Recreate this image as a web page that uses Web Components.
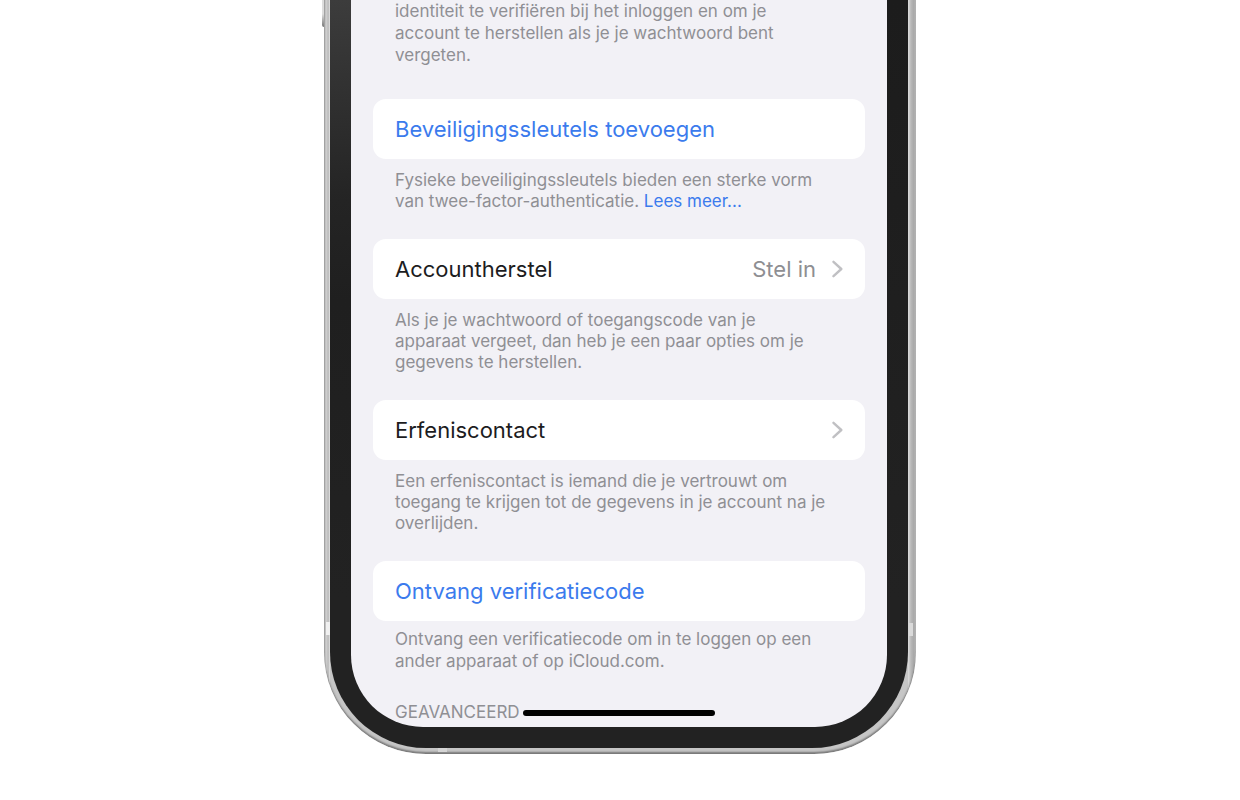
<!DOCTYPE html>
<html lang="nl">
<head>
<meta charset="utf-8">
<meta name="viewport" content="width=device-width, initial-scale=1">
<title>Instellingen – Wachtwoord en beveiliging</title>
<style>
  body { margin: 0; background: #fff; font-family: Inter, "Liberation Sans", sans-serif; }
</style>
</head>
<body>
<phone-frame>
  <settings-note roomy>identiteit te verifiëren bij het inloggen en om je<br>account te herstellen als je je wachtwoord bent<br>vergeten.</settings-note>
  <settings-section>
    <settings-row action label="Beveiligingssleutels toevoegen"></settings-row>
    <settings-note>Fysieke beveiligingssleutels bieden een sterke vorm<br>van twee-factor-authenticatie. <a href="#lees-meer">Lees meer...</a></settings-note>
  </settings-section>
  <settings-section>
    <settings-row chevron label="Accountherstel" value="Stel in"></settings-row>
    <settings-note>Als je je wachtwoord of toegangscode van je<br>apparaat vergeet, dan heb je een paar opties om je<br>gegevens te herstellen.</settings-note>
  </settings-section>
  <settings-section>
    <settings-row chevron label="Erfeniscontact"></settings-row>
    <settings-note>Een erfeniscontact is iemand die je vertrouwt om<br>toegang te krijgen tot de gegevens in je account na je<br>overlijden.</settings-note>
  </settings-section>
  <settings-section compact>
    <settings-row action label="Ontvang verificatiecode"></settings-row>
    <settings-note roomy>Ontvang een verificatiecode om in te loggen op een<br>ander apparaat of op iCloud.com.</settings-note>
  </settings-section>
  <settings-heading>GEAVANCEERD</settings-heading>
</phone-frame>

<script>
class BaseElement extends HTMLElement {
  render(html) {
    this.attachShadow({ mode: 'open' }).innerHTML = html;
  }
}

customElements.define('phone-frame', class extends BaseElement {
  connectedCallback() {
    this.render(`
      <style>
        :host { display: block; }
        .case {
          position: relative; box-sizing: border-box; width: 100%; max-width: 592px; margin: 0 auto;
          padding: 0 8px 6px 6px; border-radius: 0 0 102px 102px;
          box-shadow: inset 0 -2px 2px #777;
          background:
            linear-gradient(90deg, #a0a0a0, #c4c4c4 1px, #d0d0d0 3px, #b4b4b4 4px, #e6e6e6 6px, transparent 6px),
            linear-gradient(270deg, #cfcfcf, #a8a8a8 2px, #b8b8b8 5px, #dedede 8px, transparent 8px),
            #c6c6c6;
        }
        .bezel {
          padding: 0 21px 21px; border-radius: 0 0 96px 96px;
          background:
            linear-gradient(180deg, #3c3c3c, #242424 200px, #1f1f1f 300px, #222 600px) left / 50% 100% no-repeat,
            linear-gradient(180deg, #1c1c1c, #1f1f1f 300px, #222 600px);
        }
        .screen {
          position: relative; box-sizing: border-box; padding: 0 22px 4px; overflow: hidden;
          border-radius: 0 0 72px 72px; background: #f2f1f6;
        }
        .home { position: absolute; left: 172px; right: 172px; bottom: 11px; height: 6px; border-radius: 3px; background: #000; }
        .band { position: absolute; background: #f0f0f0; }
        .left { left: 2px; bottom: 119px; width: 4px; height: 13px; }
        .right { right: 3px; bottom: 118px; width: 4px; height: 13px; background: #dadada; }
        .bottom { left: 114px; bottom: 2px; width: 9px; height: 4px; background: #d4d4d4; }
        .key { position: absolute; left: -2px; top: 0; width: 2px; height: 27px; border-radius: 0 0 0 2px; background: linear-gradient(#ddd 14px, #777); }
      </style>
      <div class="case">
        <div class="bezel"><main class="screen"><slot></slot><div class="home"></div></main></div>
        <i class="band left"></i><i class="band right"></i><i class="band bottom"></i><i class="key"></i>
      </div>`);
  }
});

customElements.define('settings-section', class extends BaseElement {
  connectedCallback() {
    this.render(`
      <style>
        :host { display: flex; flex-direction: column; gap: 11px; margin-bottom: 27px; }
        :host([compact]) { gap: 7px; margin-bottom: 29px; }
      </style>
      <slot></slot>`);
  }
});

customElements.define('settings-row', class extends BaseElement {
  connectedCallback() {
    const value = this.getAttribute('value');
    this.render(`
      <style>
        :host { display: block; }
        button {
          display: flex; align-items: center; gap: 16px; box-sizing: border-box; width: 100%; height: 60px;
          padding: 0 22px; border: 0; border-radius: 13px; background: #fff; color: #1c1c1e;
          font: 400 22px/28px Inter, "Liberation Sans", sans-serif; text-align: left; cursor: pointer;
        }
        :host([action]) button { color: #3b7bed; }
        .label { flex: 1; }
        .value { color: #8e8e92; }
        svg { display: block; width: 11px; height: 18px; fill: none; stroke: #c0c0c3; stroke-width: 2.4; stroke-linecap: round; stroke-linejoin: round; }
      </style>
      <button type="button">
        <span class="label">${this.getAttribute('label')}</span>
        ${value ? `<span class="value">${value}</span>` : ''}
        ${this.hasAttribute('chevron') ? '<svg viewBox="0 0 11 18" aria-hidden="true"><path d="M1.5 1.8 9.3 9l-7.8 7.2"/></svg>' : ''}
      </button>`);
  }
});

customElements.define('settings-note', class extends BaseElement {
  connectedCallback() {
    this.render(`
      <style>
        :host { display: block; padding: 0 0 0 22px; color: #8f8f94; font-size: 17px; line-height: 21px; white-space: nowrap; }
        :host([roomy]) { line-height: 22px; }
        :host(:first-child) { margin-bottom: 33px; }
        ::slotted(a) { color: #3b7bed; text-decoration: none; }
      </style>
      <slot></slot>`);
  }
});

customElements.define('settings-heading', class extends BaseElement {
  connectedCallback() {
    this.render(`
      <style>
        :host { display: block; padding-left: 22px; color: #8f8f94; }
        h2 { margin: 0; font-size: 17px; line-height: 22px; font-weight: 400; }
      </style>
      <h2><slot></slot></h2>`);
  }
});
</script>
</body>
</html>
